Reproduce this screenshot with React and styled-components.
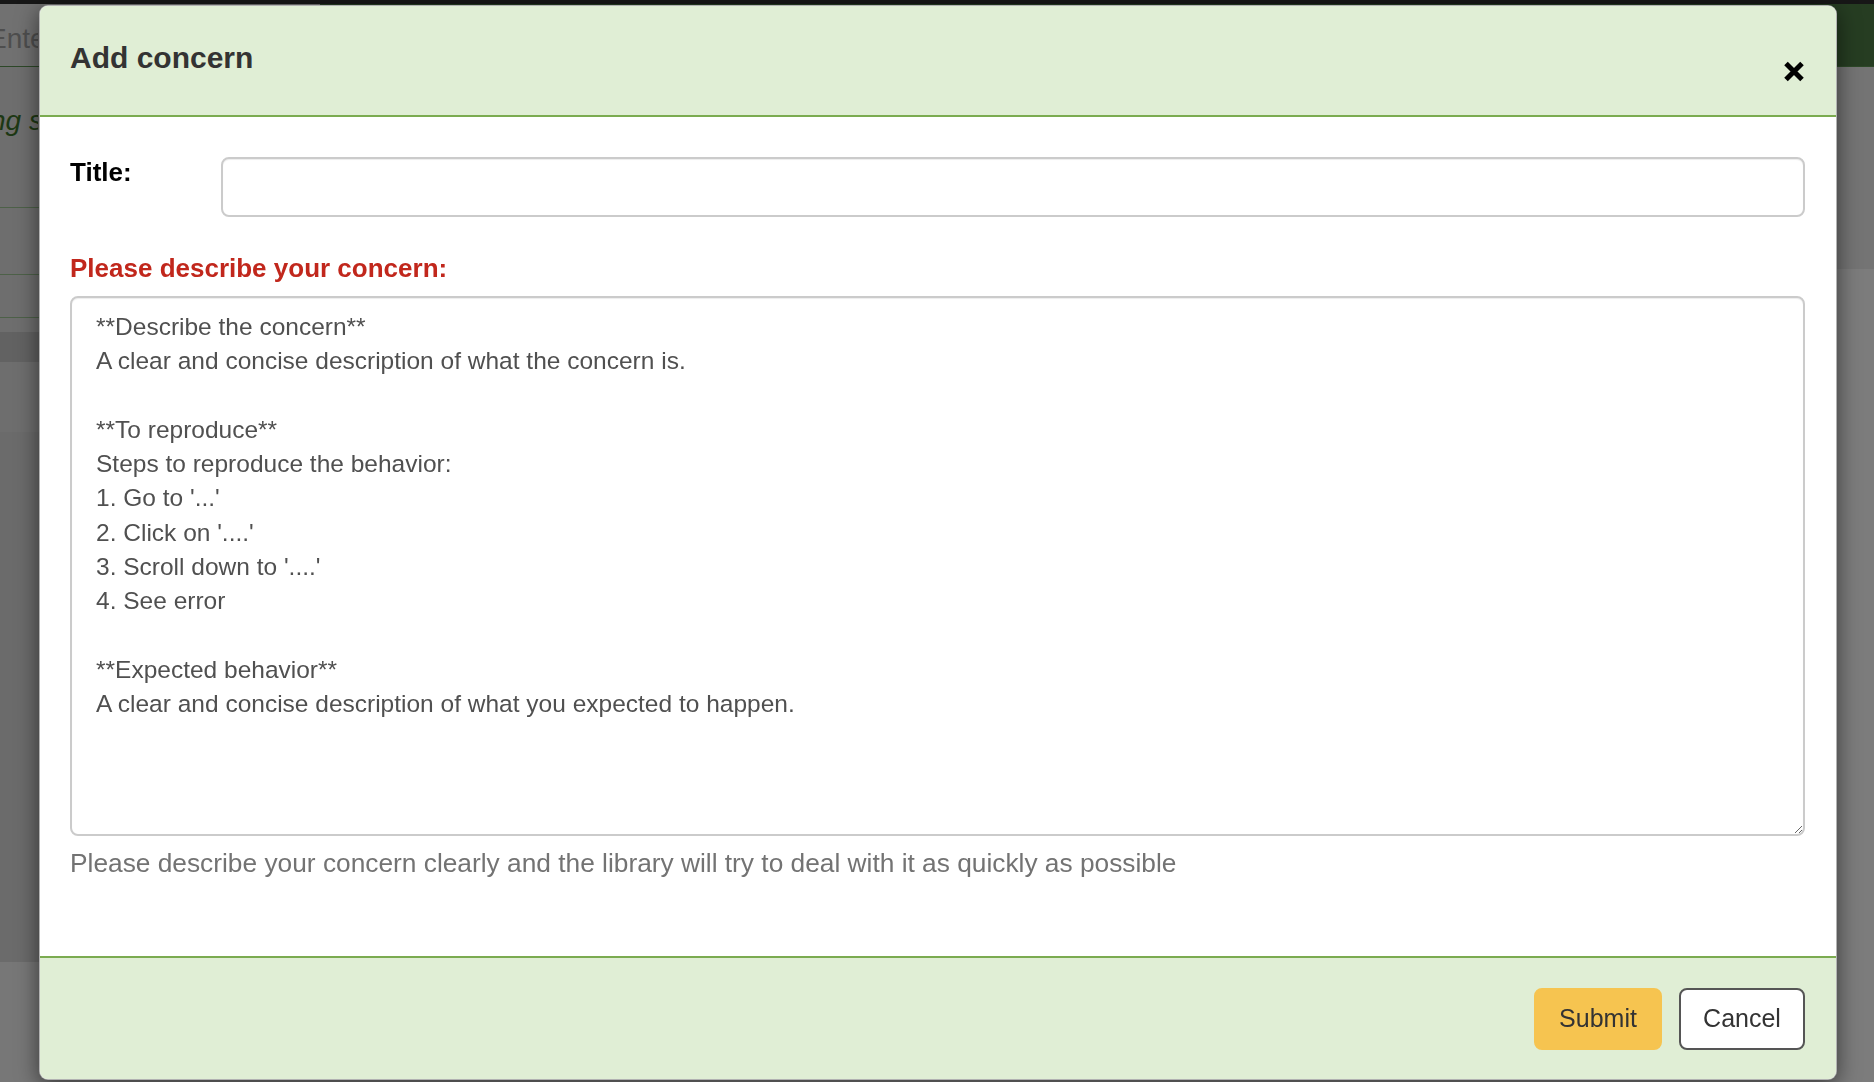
import React from 'react'
import styled, { createGlobalStyle } from 'styled-components'

const GlobalStyle = createGlobalStyle`
  html, body, #root {
    height: 100%;
  }
  body {
    margin: 0;
    overflow: hidden;
    background: #747474;
    font-family: "Liberation Sans", Arial, Helvetica, sans-serif;
  }
  * {
    box-sizing: border-box;
  }
`

const template = `**Describe the concern**
A clear and concise description of what the concern is.

**To reproduce**
Steps to reproduce the behavior:
1. Go to '...'
2. Click on '....'
3. Scroll down to '....'
4. See error

**Expected behavior**
A clear and concise description of what you expected to happen.`

const Page = styled.div`
  height: 100%;
  display: flex;
  flex-direction: column;
`

const TopStrip = styled.div`
  height: 5px;
  background: #171717;
`

const NavRow = styled.div`
  height: 63px;
  display: flex;
  border-bottom: 1px solid #2d4828;
`

const SearchStub = styled.div`
  width: 320px;
  padding-top: 6px;
  background: #717171;
`

const StubText = styled.span`
  display: block;
  width: 38px;
  overflow: hidden;
  white-space: nowrap;
  color: #4e4e4e;
  font-size: 28px;
  line-height: 57px;
  text-indent: -12px;
`

const NavFill = styled.div`
  flex: 1;
  background: #263d22;
`

const Main = styled.div`
  flex: 1;
  display: grid;
  grid-template-columns: 600px 1fr;
`

const LeftCol = styled.div`
  display: flex;
  flex-direction: column;
  background: #6e6e6e;
`

const Notice = styled.div`
  height: 141px;
  padding-top: 38px;
  border-bottom: 1px solid #4d6148;
`

const NoticeText = styled.span`
  display: block;
  width: 38px;
  overflow: hidden;
  white-space: nowrap;
  color: #1d3814;
  font-style: italic;
  font-size: 28px;
  text-indent: -10px;
`

const ListRow = styled.div`
  height: ${p => p.$h}px;
  background: ${p => p.$bg || 'transparent'};
  border-bottom: ${p => (p.$line ? '1px solid #4d6148' : 'none')};
`

const RightCol = styled.div`
  display: flex;
  flex-direction: column;
`

const RightBlock = styled.div`
  height: ${p => p.$h || 'auto'};
  flex: ${p => (p.$grow ? 1 : 'none')};
  background: ${p => p.$bg};
`

const Modal = styled.div`
  position: fixed;
  left: 39px;
  top: 5px;
  width: 1798px;
  height: 1075px;
  display: flex;
  flex-direction: column;
  background: #fff;
  border: 1px solid rgba(0, 0, 0, 0.3);
  border-radius: 9px;
  overflow: hidden;
  box-shadow: 0 5px 22px rgba(0, 0, 0, 0.55);
`

const Header = styled.div`
  height: 111px;
  flex: none;
  display: flex;
  justify-content: space-between;
  align-items: flex-start;
  padding: 30px 31px 0 30px;
  background: #e0eed5;
  border-bottom: 2px solid #7bab50;
`

const Heading = styled.h4`
  margin: 0;
  font-size: 30px;
  line-height: 43px;
  font-weight: 700;
  color: #333;
`

const CloseButton = styled.button`
  margin-top: 25px;
  padding: 0;
  border: 0;
  background: transparent;
  line-height: 0;
  cursor: pointer;
`

const Body = styled.div`
  flex: 1;
  padding: 40px 31px 0 30px;
`

const FieldRow = styled.div`
  display: grid;
  grid-template-columns: 151px 1fr;
  align-items: start;
`

const Label = styled.label`
  font-size: 26px;
  line-height: 30px;
  font-weight: 700;
  color: #000;
`

const TextInput = styled.input`
  height: 60px;
  width: 100%;
  border: 2px solid #cbcbcb;
  border-radius: 8px;
  box-shadow: inset 0 1px 1px rgba(0, 0, 0, 0.075);
  font: inherit;
  font-size: 24px;
  padding: 0 20px;
  outline: none;
`

const RequiredLabel = styled.label`
  display: block;
  margin: 33px 0 9px;
  font-size: 26px;
  line-height: 37px;
  font-weight: 700;
  color: #c1271c;
`

const TextArea = styled.textarea`
  display: block;
  width: 100%;
  height: 540px;
  border: 2px solid #cbcbcb;
  border-radius: 8px;
  box-shadow: inset 0 1px 1px rgba(0, 0, 0, 0.075);
  padding: 12px 24px;
  font-family: "Liberation Sans", Arial, Helvetica, sans-serif;
  font-size: 24.5px;
  line-height: 34.3px;
  color: #505050;
  outline: none;
  resize: vertical;
`

const Hint = styled.p`
  margin: 9px 0 0;
  font-size: 26.3px;
  line-height: 37px;
  color: #737373;
`

const Footer = styled.div`
  height: 123px;
  flex: none;
  display: flex;
  justify-content: flex-end;
  align-items: center;
  gap: 17px;
  padding: 0 31px;
  background: #e0eed5;
  border-top: 2px solid #7bab50;
`

const Button = styled.button`
  height: 62px;
  width: ${p => p.$w}px;
  border-radius: 8px;
  border: 2px solid ${p => (p.$primary ? '#f6c450' : '#555')};
  background: ${p => (p.$primary ? '#f6c450' : '#fff')};
  color: #333;
  font-family: "Liberation Sans", Arial, Helvetica, sans-serif;
  font-size: 25px;
  cursor: pointer;
`

export default function App() {
  return (
    <>
      <GlobalStyle />
      <Page>
        <TopStrip />
        <NavRow>
          <SearchStub>
            <StubText>Enter</StubText>
          </SearchStub>
          <NavFill />
        </NavRow>
        <Main>
          <LeftCol>
            <Notice>
              <NoticeText>ng s</NoticeText>
            </Notice>
            <ListRow $h={67} $line />
            <ListRow $h={43} $line />
            <ListRow $h={14} />
            <ListRow $h={30} $bg="#626262" />
            <ListRow $h={70} />
            <ListRow $h={530} $bg="#6b6b6b" />
            <ListRow $h={120} $bg="#777" />
          </LeftCol>
          <RightCol>
            <RightBlock $h="202px" $bg="#747474" />
            <RightBlock $grow $bg="#7c7c7c" />
          </RightCol>
        </Main>
      </Page>

      <Modal role="dialog">
        <Header>
          <Heading>Add concern</Heading>
          <CloseButton aria-label="Close">
            <svg width="22" height="21" viewBox="0 0 22 21">
              <path d="M3 2.5 L19 18.5 M19 2.5 L3 18.5" stroke="#000" strokeWidth="5" fill="none" />
            </svg>
          </CloseButton>
        </Header>
        <Body>
          <FieldRow>
            <Label htmlFor="concern-title">Title:</Label>
            <TextInput id="concern-title" type="text" />
          </FieldRow>
          <RequiredLabel htmlFor="concern-body">Please describe your concern:</RequiredLabel>
          <TextArea id="concern-body" defaultValue={template} />
          <Hint>Please describe your concern clearly and the library will try to deal with it as quickly as possible</Hint>
        </Body>
        <Footer>
          <Button $primary $w={128}>Submit</Button>
          <Button $w={126}>Cancel</Button>
        </Footer>
      </Modal>
    </>
  )
}
